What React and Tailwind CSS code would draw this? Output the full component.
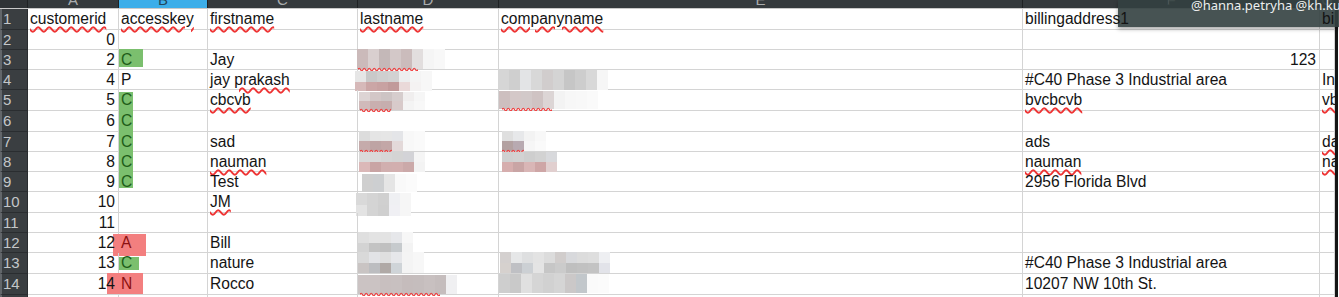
import React from 'react';

const COLS = [
  { k: 'A', w: 'w-[91px]' },
  { k: 'B', w: 'w-[89px]' },
  { k: 'C', w: 'w-[150px]' },
  { k: 'D', w: 'w-[141px]' },
  { k: 'E', w: 'w-[524px]' },
  { k: 'F', w: 'w-[297px]' },
  { k: 'G', w: 'w-[15px]' },
];

function W({ children }) {
  return (
    <span className="underline decoration-wavy decoration-[#ee3434] decoration-[1.5px] underline-offset-[2px]">
      {children}
    </span>
  );
}

function Wave({ w, cls }) {
  let d = 'M0 2.5';
  for (let x = 0; x < w; x += 5) d += ' q1.25 -2.5 2.5 0 q1.25 2.5 2.5 0';
  return (
    <svg className={`absolute ${cls}`} width={w} height={4} viewBox={`0 0 ${w} 4`}>
      <path d={d} fill="none" stroke="#ef3b3b" strokeWidth="1.2" />
    </svg>
  );
}

function Mosaic({ rows, cls = '', wave }) {
  return (
    <div className={`relative flex flex-col shrink-0 ${cls}`}>
      {rows.map((r, i) => (
        <div key={i} className="flex">
          {r.c.map((c, j) => (
            <div key={j} className={`w-[11px] shrink-0 ${r.h} ${c}`} />
          ))}
        </div>
      ))}
      {wave}
    </div>
  );
}

function HL({ cls }) {
  return <div className={`absolute ${cls}`} />;
}

const green = 'text-[#1e5c18]';
const red = 'text-[#8c1111]';

const ROWS = [
  {
    n: 1,
    h: 'h-[21px]',
    A: <W>customerid</W>,
    B: <W>accesskey</W>,
    C: <W>firstname</W>,
    D: <W>lastname</W>,
    E: <W>companyname</W>,
    F: 'billingaddress1',
    G: 'billingaddress2',
  },
  { n: 2, h: 'h-[20px]', A: '0' },
  {
    n: 3,
    h: 'h-[20px]',
    A: '2',
    B: 'C',
    Bc: green,
    Bh: 'left-0 top-[-1px] w-[24px] h-[18px] bg-[#7bbf6e]',
    C: 'Jay',
    D: (
      <Mosaic
        cls="ml-[-3px] mt-[-1px]"
        rows={[
          {
            h: 'h-[20px]',
            c: ['bg-[#cbbaba]', 'bg-[#d9cfcf]', 'bg-[#c4b8b8]', 'bg-[#d3c8c8]', 'bg-[#cbbcbc]', 'bg-[#e2dede]', 'bg-[#f5f5f5]', 'bg-[#f8f8f8]'],
          },
        ]}
        wave={<Wave w={60} cls="left-[1px] top-full mt-[-2px]" />}
      />
    ),
    F: '123',
    Fr: true,
  },
  {
    n: 4,
    h: 'h-[20px]',
    A: '4',
    B: 'P',
    C: (
      <>
        jay <W>prakash</W>
      </>
    ),
    D: (
      <Mosaic
        cls="ml-[-5px] mt-[1px]"
        rows={[
          { h: 'h-[11px]', c: ['bg-[#e6e6e6]', 'bg-[#c9c9c9]', 'bg-[#cfcfcf]', 'bg-[#d2d2d2]', 'bg-[#edeeef]', 'bg-[#f4f4f4]', 'bg-[#f7f7f7]'] },
          { h: 'h-[9px]', c: ['bg-[#d6b9b9]', 'bg-[#cba6a6]', 'bg-[#c8a2a2]', 'bg-[#c19a9a]', 'bg-[#ead9d9]', 'bg-[#f4f2f2]', 'bg-[#f7f7f7]'] },
        ]}
      />
    ),
    E: (
      <Mosaic
        cls="ml-[-3px] mt-0"
        rows={[
          {
            h: 'h-[20px]',
            c: ['bg-[#d6d6d6]', 'bg-[#cfcfcf]', 'bg-[#e3e4e6]', 'bg-[#d8d8d8]', 'bg-[#d1cdcd]', 'bg-[#d4d4d4]', 'bg-[#c6c6c6]', 'bg-[#cdcdcd]', 'bg-[#d8d8d8]', 'bg-[#f6f6f6]'],
          },
        ]}
      />
    ),
    F: '#C40 Phase 3 Industrial area',
    G: 'Industrial area',
  },
  {
    n: 5,
    h: 'h-[21px]',
    A: '5',
    B: 'C',
    Bc: green,
    Bh: 'left-0 top-[2px] w-[14px] h-[19px] bg-[#7bbf6e]',
    C: <W>cbcvb</W>,
    D: (
      <Mosaic
        cls="ml-[-1px] mt-[2px]"
        rows={[
          { h: 'h-[9px]', c: ['bg-[#ddd4d4]', 'bg-[#d3c7c7]', 'bg-[#cdc4c4]', 'bg-[#d6cdcd]', 'bg-[#f0eeee]', 'bg-[#f6f6f6]'] },
          { h: 'h-[9px]', c: ['bg-[#d0baba]', 'bg-[#c9afaf]', 'bg-[#c6aeae]', 'bg-[#d8caca]', 'bg-[#f4f4f4]', 'bg-[#f8f8f8]'] },
        ]}
        wave={<Wave w={31} cls="left-[1px] top-full mt-[-2px]" />}
      />
    ),
    E: (
      <Mosaic
        cls="ml-[-2px] mt-[1px]"
        rows={[
          {
            h: 'h-[18px]',
            c: ['bg-[#cdbfbf]', 'bg-[#d4c8c8]', 'bg-[#d2c9c9]', 'bg-[#cfc3c3]', 'bg-[#dcd5d5]', 'bg-[#f3f3f3]', 'bg-[#f7f7f7]', 'bg-[#f8f8f8]', 'bg-[#fafafa]'],
          },
        ]}
        wave={<Wave w={50} cls="left-[3px] top-full mt-[-2px]" />}
      />
    ),
    F: <W>bvcbcvb</W>,
    G: <W>vbcvb</W>,
  },
  {
    n: 6,
    h: 'h-[21px]',
    A: '6',
    B: 'C',
    Bc: green,
    Bh: 'left-0 top-0 w-[14px] h-[21px] bg-[#7bbf6e]',
  },
  {
    n: 7,
    h: 'h-[20px]',
    A: '7',
    B: 'C',
    Bc: green,
    Bh: 'left-0 top-0 w-[14px] h-[20px] bg-[#7bbf6e]',
    C: 'sad',
    D: (
      <Mosaic
        cls="ml-[-1px] mt-[-1px]"
        rows={[
          { h: 'h-[10px]', c: ['bg-[#dcdcdc]', 'bg-[#e5e5e5]', 'bg-[#e6e6e6]', 'bg-[#e4e5e8]', 'bg-[#f8f8f8]', 'bg-[#fafafa]'] },
          { h: 'h-[10px]', c: ['bg-[#c5abab]', 'bg-[#bea4a4]', 'bg-[#c3a7a7]', 'bg-[#e3d9d9]', 'bg-[#f8f8f8]', 'bg-[#fafafa]'] },
        ]}
        wave={<Wave w={32} cls="left-[1px] top-full mt-[-2px]" />}
      />
    ),
    E: (
      <Mosaic
        cls="ml-[1px] mt-[-1px]"
        rows={[
          { h: 'h-[10px]', c: ['bg-[#dfdfdf]', 'bg-[#e7e8ea]', 'bg-[#f3f3f3]', 'bg-[#f8f8f8]'] },
          { h: 'h-[10px]', c: ['bg-[#b3a1a1]', 'bg-[#b8aab1]', 'bg-[#f6f6f6]', 'bg-[#fafafa]'] },
        ]}
        wave={<Wave w={22} cls="left-0 top-full mt-[-2px]" />}
      />
    ),
    F: 'ads',
    G: <W>dasd</W>,
  },
  {
    n: 8,
    h: 'h-[20px]',
    A: '8',
    B: 'C',
    Bc: green,
    Bh: 'left-0 top-0 w-[14px] h-[20px] bg-[#7bbf6e]',
    C: <W>nauman</W>,
    D: (
      <Mosaic
        cls="ml-[-1px] mt-0"
        rows={[
          { h: 'h-[10px]', c: ['bg-[#dadada]', 'bg-[#d9d9d9]', 'bg-[#d6d6d6]', 'bg-[#d4d4d4]', 'bg-[#d3d3d7]', 'bg-[#f5f5f5]'] },
          { h: 'h-[10px]', c: ['bg-[#dbb8b8]', 'bg-[#c9a4a4]', 'bg-[#d1afaf]', 'bg-[#d2afaf]', 'bg-[#cba9a9]', 'bg-[#f3f3f3]'] },
        ]}
      />
    ),
    E: (
      <Mosaic
        cls="ml-[1px] mt-0"
        rows={[
          { h: 'h-[10px]', c: ['bg-[#d0d0d0]', 'bg-[#d2d2d2]', 'bg-[#cecece]', 'bg-[#d2d2d2]', 'bg-[#d8d9dc]'] },
          { h: 'h-[10px]', c: ['bg-[#d6aeae]', 'bg-[#c9a5a5]', 'bg-[#d9b6b6]', 'bg-[#cea6a6]', 'bg-[#e1cfcf]'] },
        ]}
      />
    ),
    F: <W>nauman</W>,
    G: <W>nauman</W>,
  },
  {
    n: 9,
    h: 'h-[20px]',
    A: '9',
    B: 'C',
    Bc: green,
    Bh: 'left-0 top-0 w-[14px] h-[16px] bg-[#7bbf6e]',
    C: 'Test',
    D: (
      <Mosaic
        cls="ml-[2px] mt-[2px]"
        rows={[{ h: 'h-[18px]', c: ['bg-[#cfcfcf]', 'bg-[#cdcfd1]', 'bg-[#e5e5e5]', 'bg-[#f9f9f9]', 'bg-[#fbfbfb]'] }]}
      />
    ),
    F: '2956 Florida Blvd',
  },
  {
    n: 10,
    h: 'h-[21px]',
    A: '10',
    C: <W>JM</W>,
    D: (
      <Mosaic
        cls="ml-[-4px] mt-[1px]"
        rows={[
          { h: 'h-[12px]', c: ['bg-[#d9d9d9]', 'bg-[#d4d4d4]', 'bg-[#d0d0d0]', 'bg-[#eff0f3]', 'bg-[#f6f6f6]'] },
          { h: 'h-[11px]', c: ['bg-[#e3e3e3]', 'bg-[#d4d4d4]', 'bg-[#cfcfcf]', 'bg-[#f0f0f4]', 'bg-[#f6f6f6]'] },
        ]}
      />
    ),
  },
  { n: 11, h: 'h-[20px]', A: '11' },
  {
    n: 12,
    h: 'h-[20px]',
    A: '12',
    B: 'A',
    Bc: red,
    Bh: 'left-[-6px] top-[1px] w-[33px] h-[22px] bg-[#f37f7f]',
    C: 'Bill',
    D: (
      <Mosaic
        cls="ml-[-2px] mt-[-1px]"
        rows={[
          { h: 'h-[11px]', c: ['bg-[#dfdfdf]', 'bg-[#e3e3e3]', 'bg-[#e3e3e3]', 'bg-[#e6e7ea]', 'bg-[#f7f7f7]'] },
          { h: 'h-[9px]', c: ['bg-[#d3d3d3]', 'bg-[#c3c3c3]', 'bg-[#c0c0c0]', 'bg-[#c6cacd]', 'bg-[#f3f3f3]'] },
        ]}
      />
    ),
  },
  {
    n: 13,
    h: 'h-[21px]',
    A: '13',
    B: 'C',
    Bc: green,
    Bh: 'left-0 top-[4px] w-[20px] h-[13px] bg-[#7bbf6e]',
    C: 'nature',
    D: (
      <Mosaic
        cls="ml-[-2px] mt-[-1px]"
        rows={[
          { h: 'h-[11px]', c: ['bg-[#d9d9d9]', 'bg-[#e2e3e6]', 'bg-[#dfdfdf]', 'bg-[#e6e7ea]', 'bg-[#f4f4f4]', 'bg-[#f7f7f7]'] },
          { h: 'h-[10px]', c: ['bg-[#c9c4c3]', 'bg-[#bcbdc0]', 'bg-[#b0a9a6]', 'bg-[#cfd4d8]', 'bg-[#f4f4f4]', 'bg-[#f7f7f7]'] },
        ]}
      />
    ),
    E: (
      <Mosaic
        cls="ml-[-1px] mt-[-1px]"
        rows={[
          {
            h: 'h-[11px]',
            c: ['bg-[#d4d0cf]', 'bg-[#e6e7e8]', 'bg-[#dedfe0]', 'bg-[#e3e3e3]', 'bg-[#dcdcdc]', 'bg-[#d1cdcc]', 'bg-[#d8d9dc]', 'bg-[#dcdcdc]', 'bg-[#dedede]', 'bg-[#eeeff2]'],
          },
          {
            h: 'h-[10px]',
            c: ['bg-[#d6d1ce]', 'bg-[#bfc0c4]', 'bg-[#ccd0d4]', 'bg-[#e4e4e4]', 'bg-[#c6c6c6]', 'bg-[#cbcbcb]', 'bg-[#bfbfbf]', 'bg-[#c1c1c1]', 'bg-[#c3c3c3]', 'bg-[#e2e3e9]'],
          },
        ]}
      />
    ),
    F: '#C40 Phase 3 Industrial area',
  },
  {
    n: 14,
    h: 'h-[21px]',
    A: '14',
    B: 'N',
    Bc: red,
    Bh: 'left-[-12px] top-[-1px] w-[36px] h-[21px] bg-[#f37f7f]',
    C: 'Rocco',
    D: (
      <Mosaic
        cls="ml-[-2px] mt-[1px]"
        rows={[
          {
            h: 'h-[19px]',
            c: ['bg-[#cbc3c3]', 'bg-[#cbc3c3]', 'bg-[#c8bfbf]', 'bg-[#c8c0c0]', 'bg-[#c5bcbc]', 'bg-[#c5bdbd]', 'bg-[#c8c0c0]', 'bg-[#c5bdbd]', 'bg-[#f0f0f2]'],
          },
        ]}
        wave={<Wave w={80} cls="left-[2px] top-full mt-[-2px]" />}
      />
    ),
    E: (
      <Mosaic
        cls="ml-[-2px] mt-0"
        rows={[
          {
            h: 'h-[19px]',
            c: ['bg-[#cecece]', 'bg-[#c9c9c9]', 'bg-[#e0e0e0]', 'bg-[#d5d5d5]', 'bg-[#d1d1d1]', 'bg-[#d5d5d5]', 'bg-[#cbc8c8]', 'bg-[#c2c7cb]', 'bg-[#fafafa]', 'bg-[#fbfbfb]'],
          },
        ]}
      />
    ),
    F: '10207 NW 10th St.',
  },
  { n: 15, h: 'h-[20px]' },
];

function Cell({ col, row }) {
  const v = row[col.k];
  const isNum = col.k === 'A' && row.n > 1;
  const right = isNum || (col.k === 'F' && row.Fr);
  const isText = typeof v === 'string' || (v && v.type !== Mosaic);
  return (
    <div
      className={`relative shrink-0 h-full flex items-start border-r border-b border-[#d4d4d4] ${col.w} ${
        right ? 'justify-end pr-[3px]' : 'pl-[2px]'
      }`}
    >
      {col.k === 'B' && row.Bh && <HL cls={row.Bh} />}
      {v != null &&
        (isText ? (
          <span
            className={`relative z-10 whitespace-nowrap leading-[19px] ${
              col.k === 'B' && row.Bc ? row.Bc : 'text-[#141414]'
            }`}
          >
            {v}
          </span>
        ) : (
          v
        ))}
    </div>
  );
}

export default function App() {
  return (
    <div className="w-[1339px] h-[297px] overflow-hidden bg-white relative flex font-['Liberation_Sans',Arial,sans-serif] text-[15.6px]">
      <div className="w-[1335px] shrink-0 h-full overflow-hidden flex flex-col">
        <div className="flex h-[9px] shrink-0 border-b border-[#c9c9c9] overflow-hidden">
          <div className="w-[28px] shrink-0 h-full bg-[#2f3336] border-r border-[#1f2224]" />
          {COLS.map((c) => (
            <div
              key={c.k}
              className={`${c.w} shrink-0 h-full border-r border-[#1f2224] flex justify-center overflow-hidden ${
                c.k === 'B' ? 'bg-[#3daee9] text-[#24475a]' : 'bg-[#353a3d] text-[#a9acae]'
              }`}
            >
              <span className="text-[15px] leading-[15px] -mt-2">{c.k}</span>
            </div>
          ))}
        </div>
        {ROWS.map((r) => (
          <div key={r.n} className={`flex shrink-0 ${r.h}`}>
            <div className="w-[28px] shrink-0 h-full bg-[#3a3e41] border-l-2 border-l-[#62666a] border-b border-b-[#2a2d30] border-r border-r-[#2a2d30] text-[#c4c7c9] text-[15px] leading-[19px] pl-[1px]">
              {r.n}
            </div>
            {COLS.map((c) => (
              <Cell key={c.k} col={c} row={r} />
            ))}
          </div>
        ))}
      </div>
      <div className="w-[3px] shrink-0 h-full bg-[#151515]" />
      <div className="w-[1px] shrink-0 h-full bg-white" />

      <div className="absolute top-0 right-0 w-[221px] h-[27px] bg-[#334040]/90 shadow-[0_2px_4px_rgba(0,0,0,0.35)] overflow-hidden">
        <div className="absolute left-[50px] top-0 w-[1px] h-[4px] bg-[#4a5555]" />
        <div className="pl-[73px] -mt-[3px] text-[13px] leading-[16px] text-[#eceeee] whitespace-nowrap font-['Noto_Sans',sans-serif]">
          @hanna.petryha @kh.kuzmenko
        </div>
      </div>
    </div>
  );
}
